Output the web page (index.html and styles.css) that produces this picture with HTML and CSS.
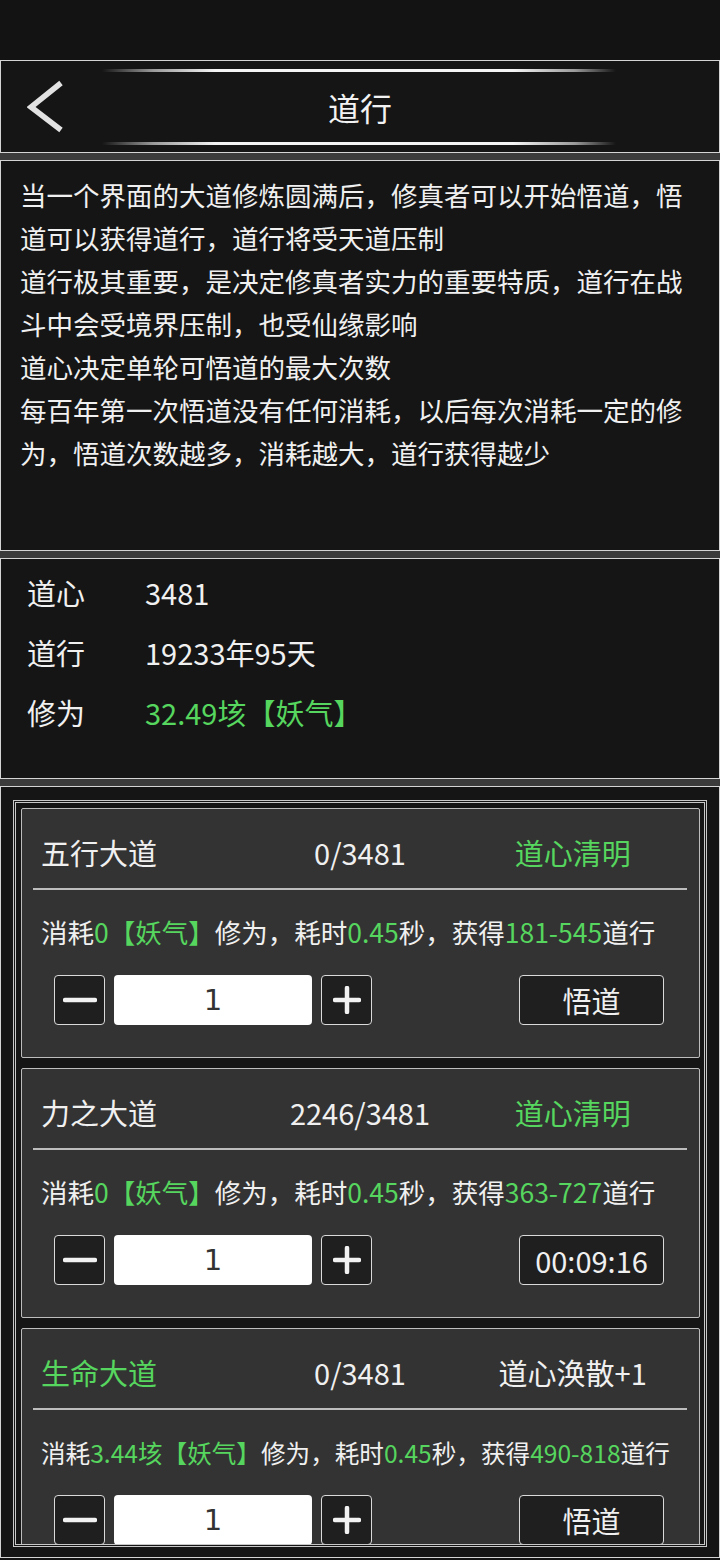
FILE: index.html
```html
<!DOCTYPE html>
<html lang="zh-CN">
<head>
<meta charset="UTF-8">
<meta name="viewport" content="width=device-width, initial-scale=1.0">
<title>道行</title>
<link rel="stylesheet" href="styles.css">
</head>
<body>
<div class="page">
  <header class="panel topbar">
    <div class="glow"></div>
    <div class="title-row">
      <svg class="back" width="40" height="70" viewBox="0 0 40 70">
        <polyline points="34,11 4,35 34,58" fill="none" stroke="#e2e2e2" stroke-width="5.5"/>
      </svg>
      <h1>道行</h1>
      <span></span>
    </div>
    <div class="glow"></div>
  </header>

  <section class="panel intro">
    <p>当一个界面的大道修炼圆满后，修真者可以开始悟道，悟道可以获得道行，道行将受天道压制</p>
    <p>道行极其重要，是决定修真者实力的重要特质，道行在战斗中会受境界压制，也受仙缘影响</p>
    <p>道心决定单轮可悟道的最大次数</p>
    <p>每百年第一次悟道没有任何消耗，以后每次消耗一定的修为，悟道次数越多，消耗越大，道行获得越少</p>
  </section>

  <section class="panel stats">
    <div class="stat"><span>道心</span><span>3481</span></div>
    <div class="stat"><span>道行</span><span>19233年95天</span></div>
    <div class="stat"><span>修为</span><span class="green">32.49垓【妖气】</span></div>
  </section>

  <section class="panel list">
    <div class="scroller">
      <div class="card">
        <div class="card-head">
          <span class="name">五行大道</span>
          <span class="count">0/3481</span>
          <span class="state green">道心清明</span>
        </div>
        <div class="rule"></div>
        <p class="cost">消耗<span class="green">0【妖气】</span>修为，耗时<span class="green">0.45</span>秒，获得<span class="green">181-545</span>道行</p>
        <div class="controls">
          <button class="step"><svg width="34" height="6" viewBox="0 0 34 6"><line x1="2" y1="3" x2="32" y2="3" stroke="#f2f2f2" stroke-width="4.5" stroke-linecap="round"/></svg></button>
          <div class="qty">1</div>
          <button class="step"><svg width="28" height="28" viewBox="0 0 28 28"><path d="M2 14H26M14 2V26" stroke="#f2f2f2" stroke-width="4.5" stroke-linecap="round"/></svg></button>
          <button class="act">悟道</button>
        </div>
      </div>

      <div class="card">
        <div class="card-head">
          <span class="name">力之大道</span>
          <span class="count">2246/3481</span>
          <span class="state green">道心清明</span>
        </div>
        <div class="rule"></div>
        <p class="cost">消耗<span class="green">0【妖气】</span>修为，耗时<span class="green">0.45</span>秒，获得<span class="green">363-727</span>道行</p>
        <div class="controls">
          <button class="step"><svg width="34" height="6" viewBox="0 0 34 6"><line x1="2" y1="3" x2="32" y2="3" stroke="#f2f2f2" stroke-width="4.5" stroke-linecap="round"/></svg></button>
          <div class="qty">1</div>
          <button class="step"><svg width="28" height="28" viewBox="0 0 28 28"><path d="M2 14H26M14 2V26" stroke="#f2f2f2" stroke-width="4.5" stroke-linecap="round"/></svg></button>
          <button class="act">00:09:16</button>
        </div>
      </div>

      <div class="card">
        <div class="card-head">
          <span class="name green">生命大道</span>
          <span class="count">0/3481</span>
          <span class="state">道心涣散+1</span>
        </div>
        <div class="rule"></div>
        <p class="cost small">消耗<span class="green">3.44垓【妖气】</span>修为，耗时<span class="green">0.45</span>秒，获得<span class="green">490-818</span>道行</p>
        <div class="controls">
          <button class="step"><svg width="34" height="6" viewBox="0 0 34 6"><line x1="2" y1="3" x2="32" y2="3" stroke="#f2f2f2" stroke-width="4.5" stroke-linecap="round"/></svg></button>
          <div class="qty">1</div>
          <button class="step"><svg width="28" height="28" viewBox="0 0 28 28"><path d="M2 14H26M14 2V26" stroke="#f2f2f2" stroke-width="4.5" stroke-linecap="round"/></svg></button>
          <button class="act">悟道</button>
        </div>
      </div>
    </div>
  </section>
</div>
</body>
</html>
```

FILE: styles.css
```css
* {
  box-sizing: border-box;
}
body {
  margin: 0;
  background-color: #131313;
  font-family: "Noto Sans CJK SC", "Noto Sans", sans-serif;
  color: #f0f0f0;
}
.page {
  margin-top: 60px;
  background-color: #3b3b3b;
  display: flex;
  flex-direction: column;
  gap: 7px;
}
.panel {
  background-color: #151515;
  border: 1px solid #d4d4d4;
}
.green {
  color: #56d65e;
}

/* 顶部标题栏 */
.topbar {
  height: 93px;
  padding: 8px 0 7px;
}
.glow {
  height: 3px;
  margin: 0 103px 0 101px;
  border-radius: 2px;
  background: linear-gradient(to right, rgba(255,255,255,0), #9a9a9a 10%, #f4f4f4 22%, #f4f4f4 80%, #9a9a9a 92%, rgba(255,255,255,0));
}
.title-row {
  height: 70px;
  display: grid;
  grid-template-columns: 1fr auto 1fr;
  align-items: center;
}
.back {
  margin-left: 26px;
}
.title-row h1 {
  margin: 0;
  font-size: 32px;
  font-weight: normal;
  color: #f2f2f2;
}

/* 说明文字 */
.intro {
  height: 391px;
  padding: 12px 20px 0 19px;
}
.intro p {
  margin: 0;
  font-size: 26.5px;
  line-height: 43px;
}

/* 属性 */
.stats {
  height: 221px;
  padding: 3px 0 0 26px;
}
.stat {
  display: grid;
  grid-template-columns: 118px 1fr;
  height: 60px;
  align-items: center;
  font-size: 29px;
}

/* 大道列表 */
.list {
  padding: 13px 12px 10px;
}
.scroller {
  height: 747px;
  overflow: hidden;
  border: 3px double #c8c8c8;
  padding: 5px 4px 0 5px;
}
.card {
  background-color: #333333;
  border: 1px solid #bdbdbd;
  border-radius: 2px;
  height: 250px;
  padding-top: 13px;
  margin-bottom: 10px;
}
.card-head {
  display: grid;
  grid-template-columns: 1fr 1fr 1fr;
  height: 60px;
  align-items: center;
  padding: 0 20px 0 19px;
  font-size: 29px;
}
.card-head .count,
.card-head .state {
  text-align: center;
}
.rule {
  height: 2px;
  margin: 6px 12px 0 11px;
  background-color: #bdbdbd;
}
.cost {
  margin: 22px 0 0;
  padding-left: 19px;
  font-size: 26.5px;
  line-height: 40px;
  white-space: nowrap;
}
.cost.small {
  font-size: 24.6px;
}
.controls {
  display: flex;
  align-items: center;
  margin-top: 23px;
  padding: 0 35px 0 32px;
  gap: 9px;
}
.controls button {
  font-family: inherit;
  color: #f0f0f0;
  background-color: #1f1f1f;
  border: 1.5px solid #dadada;
  border-radius: 4px;
  height: 50px;
  padding: 0;
  display: flex;
  align-items: center;
  justify-content: center;
}
.step {
  width: 51px;
}
.qty {
  width: 198px;
  height: 50px;
  background-color: #fff;
  border-radius: 4px;
  color: #333;
  font-family: "DejaVu Sans", sans-serif;
  font-size: 29px;
  text-align: center;
  line-height: 50px;
}
.act {
  margin-left: auto;
  width: 145px;
  font-size: 29px;
}
```
